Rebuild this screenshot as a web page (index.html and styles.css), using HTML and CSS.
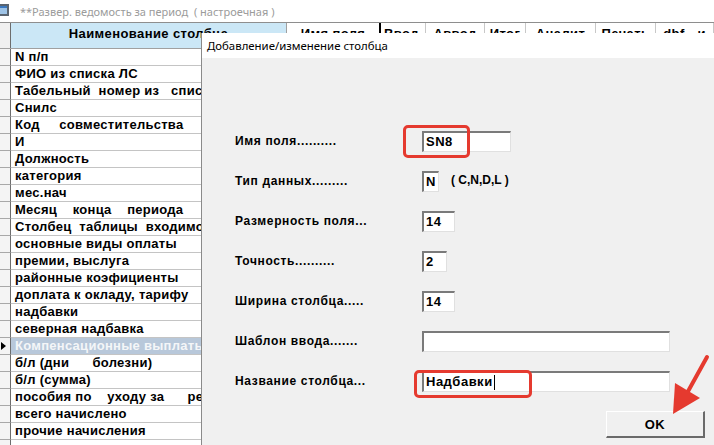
FILE: index.html
```html
<!DOCTYPE html>
<html lang="ru">
<head>
<meta charset="utf-8">
<title>Развер. ведомость</title>
<link rel="stylesheet" href="styles.css">
</head>
<body>
<div class="app">
  <div class="titlebar">
    <svg class="app-icon" width="10" height="12" viewBox="0 0 10 12"><rect x="0" y="0" width="10" height="12" fill="#5a6470"/><rect x="1" y="2" width="7" height="8" fill="#9ec3e6"/><rect x="1" y="2" width="7" height="2" fill="#3b78c0"/></svg>
    <span class="title-text">**Развер. ведомость за период  ( настроечная )</span>
  </div>
  <div class="grid">
    <div class="hdr">
      <div class="gut"></div>
      <div class="hc c1">Наименование столбца</div>
      <div class="hc c2">Имя поля</div>
      <div class="hc c3">Ввод</div>
      <div class="hc c4">Аввод</div>
      <div class="hc c5">Итог</div>
      <div class="hc c6">Аналит</div>
      <div class="hc c7">Печать</div>
      <div class="hc c8">dbf - и</div>
    </div>
    <div class="row"><div class="gut"></div><div class="cell">N п/п</div></div>
    <div class="row"><div class="gut"></div><div class="cell">ФИО из списка ЛС</div></div>
    <div class="row"><div class="gut"></div><div class="cell">Табельный  номер из   списка</div></div>
    <div class="row"><div class="gut"></div><div class="cell">Снилс</div></div>
    <div class="row"><div class="gut"></div><div class="cell">Код     совместительства</div></div>
    <div class="row"><div class="gut"></div><div class="cell">И</div></div>
    <div class="row"><div class="gut"></div><div class="cell">Должность</div></div>
    <div class="row"><div class="gut"></div><div class="cell">категория</div></div>
    <div class="row"><div class="gut"></div><div class="cell">мес.нач</div></div>
    <div class="row"><div class="gut"></div><div class="cell">Месяц    конца    периода</div></div>
    <div class="row"><div class="gut"></div><div class="cell">Столбец  таблицы  входимости</div></div>
    <div class="row"><div class="gut"></div><div class="cell">основные виды оплаты</div></div>
    <div class="row"><div class="gut"></div><div class="cell">премии, выслуга</div></div>
    <div class="row"><div class="gut"></div><div class="cell">районные коэфициенты</div></div>
    <div class="row"><div class="gut"></div><div class="cell">доплата к окладу, тарифу</div></div>
    <div class="row"><div class="gut"></div><div class="cell">надбавки</div></div>
    <div class="row"><div class="gut"></div><div class="cell">северная надбавка</div></div>
    <div class="row sel"><div class="gut"><span class="pointer"></span></div><div class="cell">Компенсационные выплаты</div></div>
    <div class="row"><div class="gut"></div><div class="cell">б/л (дни      болезни)</div></div>
    <div class="row"><div class="gut"></div><div class="cell">б/л (сумма)</div></div>
    <div class="row"><div class="gut"></div><div class="cell">пособия по    уходу за      ребенком</div></div>
    <div class="row"><div class="gut"></div><div class="cell">всего начислено</div></div>
    <div class="row"><div class="gut"></div><div class="cell">прочие начисления</div></div>
    <div class="row"><div class="gut"></div><div class="cell"></div></div>
  </div>

  <div class="dialog">
    <div class="dlg-title">Добавление/изменение столбца</div>
    <div class="dlg-body">
      <div class="form">
        <div class="lbl">Имя поля..........</div>
        <div class="fld"><span class="inp w89">SN8</span></div>
        <div class="lbl">Тип данных.........</div>
        <div class="fld"><span class="inp w17">N</span><span class="hint">( C,N,D,L )</span></div>
        <div class="lbl">Размерность поля...</div>
        <div class="fld"><span class="inp w33">14</span></div>
        <div class="lbl">Точность..........</div>
        <div class="fld"><span class="inp w25">2</span></div>
        <div class="lbl">Ширина столбца.....</div>
        <div class="fld"><span class="inp w33">14</span></div>
        <div class="lbl">Шаблон ввода.......</div>
        <div class="fld"><span class="inp w248"></span></div>
        <div class="lbl">Название столбца...</div>
        <div class="fld"><span class="inp w248">Надбавки<span class="caret"></span></span></div>
      </div>
      <div class="actions"><button class="btn">OK</button></div>
    </div>
    <div class="mark mark1"></div>
    <div class="mark mark2"></div>
  </div>

  <svg class="arrow" width="60" height="70" viewBox="660 350 60 70">
    <line x1="707" y1="357" x2="686" y2="395" stroke="#e53a2f" stroke-width="4" stroke-linecap="round"/>
    <polygon points="673,414 675,383 700,398" fill="#e53a2f"/>
  </svg>
</div>
</body>
</html>
```
FILE: styles.css
```css
html, body {
  margin: 0;
  padding: 0;
  background: #ffffff;
}
.app {
  position: relative;
  width: 714px;
  height: 445px;
  overflow: hidden;
  font-family: "Liberation Sans", Arial, sans-serif;
}
.titlebar {
  height: 22px;
  display: flex;
  align-items: center;
  background: #ffffff;
}
.app-icon {
  margin-left: -1px;
  margin-top: -2px;
}
.title-text {
  margin-left: 11px;
  font-family: "Noto Sans", sans-serif;
  font-size: 11px;
  color: #9b9b9b;
  white-space: pre;
}
.grid {
  border-top: 1px solid #8e8e8e;
}
.hdr {
  display: flex;
  height: 25px;
  border-bottom: 1px solid #a0a0a0;
  background: #ffffff;
}
.hdr .gut {
  background: #f0f0f0;
}
.gut {
  width: 10px;
  flex: none;
  border-right: 1px solid #6d6d6d;
  position: relative;
}
.hc {
  flex: none;
  box-sizing: border-box;
  border-right: 1px solid #c8c8c8;
  font-weight: bold;
  font-size: 13px;
  letter-spacing: 0.4px;
  text-align: center;
  line-height: 22px;
  white-space: nowrap;
  overflow: hidden;
}
.c1 { width: 276px; background: #cbe7f6; border-right-color: #a0a0a0; }
.c2 { width: 94px; border-right: 2px solid #000; }
.c3 { width: 45px; text-align: left; padding-left: 3px; }
.c4 { width: 59px; }
.c5 { width: 41px; }
.c6 { width: 70px; }
.c7 { width: 60px; }
.c8 { width: 58px; }
.row {
  display: flex;
  height: 16px;
  border-bottom: 1px solid #c4c4c4;
}
.row .gut {
  background: #f4f4f4;
  border-bottom: 1px solid #a8a8a8;
  margin-bottom: -1px;
}
.cell {
  width: 276px;
  box-sizing: border-box;
  padding-left: 4px;
  font-weight: bold;
  font-size: 13px;
  letter-spacing: 0.28px;
  line-height: 16px;
  white-space: pre;
  overflow: hidden;
  color: #000;
}
.sel .cell {
  background: #b8c8da;
  color: #f4f6f8;
}
.pointer {
  position: absolute;
  left: 1px;
  top: 4px;
  border-left: 5px solid #000;
  border-top: 4px solid transparent;
  border-bottom: 4px solid transparent;
}
.dialog {
  position: absolute;
  left: 201px;
  top: 33px;
  width: 513px;
  height: 412px;
  box-sizing: border-box;
  border-left: 1px solid #8a8a8a;
  display: flex;
  flex-direction: column;
  background: #f0f0f0;
}
.dlg-title {
  height: 25px;
  background: #ffffff;
  font-family: "Noto Sans", sans-serif;
  font-size: 11.4px;
  line-height: 25px;
  padding-left: 5px;
  color: #000;
}
.dlg-body {
  flex: 1;
  padding: 73px 9px 0 31px;
}
.form {
  display: grid;
  grid-template-columns: 189px auto;
  row-gap: 19px;
  align-items: center;
}
.lbl {
  font-weight: bold;
  font-size: 12px;
  letter-spacing: 0.65px;
  white-space: pre;
  padding-left: 2px;
  margin-top: -2px;
}
.fld {
  display: flex;
  align-items: center;
  height: 21px;
}
.inp {
  box-sizing: border-box;
  height: 21px;
  background: #fff;
  border-style: solid;
  border-width: 2px 1px 1px 2px;
  border-color: #7a7a7a #e0e0e0 #e0e0e0 #7a7a7a;
  font-weight: bold;
  font-size: 13px;
  letter-spacing: 0.5px;
  line-height: 18px;
  padding-left: 2px;
  display: flex;
  align-items: center;
}
.w89 { width: 89px; }
.w17 { width: 17px; }
.w33 { width: 33px; }
.w25 { width: 25px; }
.w248 { width: 248px; }
.caret {
  display: inline-block;
  width: 1px;
  height: 15px;
  background: #000;
  margin-left: 1px;
}
.hint {
  margin-left: 12px;
  font-weight: bold;
  font-size: 12px;
  margin-top: -3px;
}
.actions {
  display: flex;
  justify-content: flex-end;
  margin-top: 19px;
}
.btn {
  width: 99px;
  height: 27px;
  box-sizing: border-box;
  background: #f0f0f0;
  border-style: solid;
  border-width: 1px 2px 2px 1px;
  border-color: #ffffff #6a6a6a #6a6a6a #ffffff;
  font-family: "Liberation Sans", Arial, sans-serif;
  font-weight: bold;
  font-size: 13px;
  letter-spacing: 0.5px;
  padding: 0;
  color: #000;
}
.mark {
  position: absolute;
  border: 3px solid #e53a2f;
  border-radius: 5px;
  box-sizing: border-box;
}
.mark1 { left: 201px; top: 92px; width: 67px; height: 33px; }
.mark2 { left: 212px; top: 337px; width: 118px; height: 28px; }
.arrow {
  position: absolute;
  left: 660px;
  top: 350px;
}
```
